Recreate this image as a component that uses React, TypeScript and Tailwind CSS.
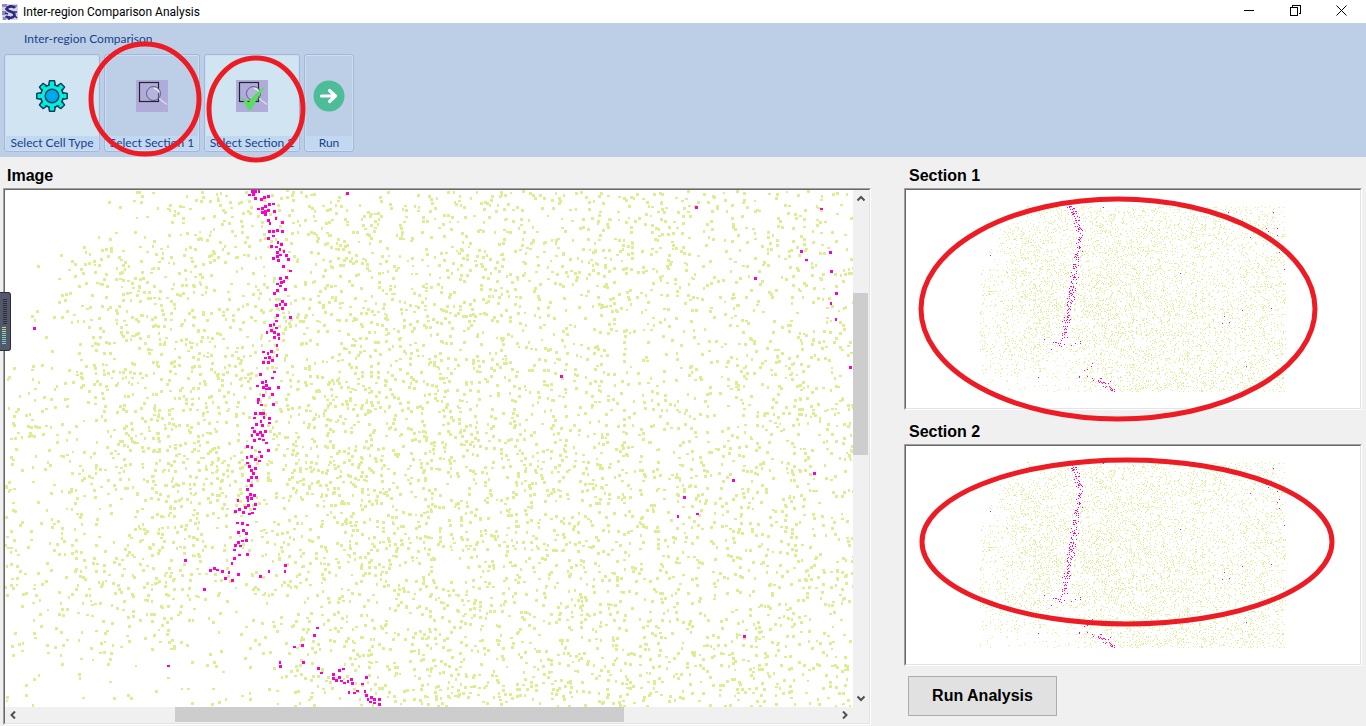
import type { ReactNode } from 'react';
import clsx from 'clsx';

type Cell = { x: number; y: number; w: number; h: number };

const IMAGE_WIDTH = 848;
const IMAGE_HEIGHT = 516;
const THUMB_SCALE = 0.36;

// Relative cell density over the tissue, 0 (empty) to 9 (packed)
const DENSITY = [
  '000134656665767566746553',
  '015666556777776667754454',
  '035878666688755565545534',
  '225768657787775455555566',
  '444589668888776665655666',
  '324789788887666577667766',
  '532475547777877776455565',
  '457785236677677665555566',
  '233322235567776665545543',
  '122111145688988776765655',
];

// Centres of the marked cells
const MARKED = [
  247, 1, 250, 1, 254, 1, 244, 5, 248, 4, 250, 8, 256, 9, 259, 7, 263, 6, 268, 14, 264, 14, 260, 16,
  253, 19, 257, 18, 257, 22, 260, 21, 263, 20, 260, 24, 269, 21, 271, 28, 263, 30, 265, 33, 277, 32,
  264, 41, 268, 41, 272, 40, 277, 41, 268, 46, 263, 48, 273, 52, 276, 54, 266, 56, 271, 57, 275, 59,
  272, 62, 279, 61, 275, 65, 272, 66, 281, 65, 268, 68, 273, 70, 283, 69, 278, 76, 285, 81, 281, 87,
  275, 88, 276, 92, 279, 91, 272, 94, 275, 96, 280, 99, 272, 100, 269, 103, 277, 111, 275, 114,
  271, 115, 280, 114, 277, 118, 272, 125, 285, 127, 271, 131, 269, 134, 265, 135, 271, 138, 266, 140,
  262, 142, 269, 142, 273, 144, 269, 147, 274, 148, 272, 155, 258, 162, 266, 161, 263, 163, 272, 165,
  264, 167, 260, 168, 267, 170, 263, 172, 258, 172, 269, 182, 255, 184, 267, 188, 261, 191, 257, 192,
  252, 196, 258, 197, 261, 195, 261, 199, 264, 198, 273, 197, 258, 205, 267, 204, 253, 209, 253, 212,
  256, 215, 268, 214, 250, 223, 255, 223, 258, 223, 249, 228, 259, 227, 264, 228, 256, 231, 257, 235,
  264, 233, 251, 234, 247, 238, 249, 241, 247, 245, 255, 242, 260, 241, 252, 244, 257, 245, 249, 250,
  254, 249, 258, 250, 261, 253, 242, 256, 247, 257, 263, 260, 254, 262, 242, 267, 246, 266, 256, 266,
  250, 269, 254, 271, 242, 273, 244, 276, 246, 280, 250, 278, 248, 283, 246, 287, 251, 287, 243, 290,
  246, 295, 242, 299, 245, 304, 249, 305, 242, 307, 246, 308, 233, 310, 243, 310, 250, 314, 243, 315,
  240, 317, 234, 319, 249, 319, 230, 321, 238, 322, 244, 324, 247, 323, 232, 333, 237, 333, 242, 335,
  238, 340, 233, 342, 241, 343, 241, 350, 237, 351, 233, 352, 230, 355, 235, 356, 229, 360, 234, 365,
  242, 364, 229, 368, 227, 373, 180, 370, 205, 380, 209, 378, 212, 380, 217, 381, 224, 382, 233, 384,
  220, 388, 227, 390, 199, 399, 255, 386, 264, 381, 280, 375, 280, 381, 312, 438, 309, 445, 297, 455,
  289, 457, 275, 472, 275, 476, 298, 472, 313, 478, 316, 483, 328, 484, 334, 480, 338, 479, 328, 488,
  334, 487, 331, 490, 336, 491, 339, 493, 343, 491, 346, 489, 347, 493, 361, 487, 357, 494, 344, 502,
  349, 503, 352, 501, 360, 501, 361, 505, 363, 509, 366, 507, 369, 509, 374, 509, 365, 512, 369, 513,
  374, 514, 163, 476, 29, 138, 342, 3, 691, 17, 816, 19, 796, 61, 825, 62, 801, 70, 826, 81, 750, 88,
  831, 103, 826, 113, 831, 129, 845, 177, 556, 186, 809, 283, 728, 290, 679, 307, 673, 326, 692, 324,
  739, 446,
];

function createRandom(seed: number) {
  let a = seed;
  return () => {
    a = (a + 0x6d2b79f5) | 0;
    let t = Math.imul(a ^ (a >>> 15), 1 | a);
    t = (t + Math.imul(t ^ (t >>> 7), 61 | t)) ^ t;
    return ((t ^ (t >>> 14)) >>> 0) / 4294967296;
  };
}

function cellSize(r: number) {
  if (r < 0.6) return { w: 3, h: 3 };
  if (r < 0.78) return { w: 3, h: 2 };
  if (r < 0.96) return { w: 2, h: 3 };
  return { w: 2, h: 2 };
}

function scatterCells(): Cell[] {
  const random = createRandom(2024);
  const cells: Cell[] = [];
  const used = new Set<number>();
  for (let i = 0; i < 10600; i++) {
    const x = Math.floor(random() * IMAGE_WIDTH);
    const y = Math.floor(random() * IMAGE_HEIGHT);
    // blur the borders between neighbouring density squares
    const jx = Math.min(IMAGE_WIDTH - 1, Math.max(0, x + (random() - 0.5) * 40));
    const jy = Math.min(IMAGE_HEIGHT - 1, Math.max(0, y + (random() - 0.5) * 40));
    const row = DENSITY[Math.floor((jy / IMAGE_HEIGHT) * DENSITY.length)];
    const density = Number(row[Math.floor((jx / IMAGE_WIDTH) * row.length)]);
    const keep = random() * 9 < density;
    const size = cellSize(random());
    const slot = Math.floor(x / 4) * 1000 + Math.floor(y / 4);
    if (!keep || used.has(slot)) continue;
    used.add(slot);
    cells.push({ x, y, ...size });
  }
  return cells;
}

function markedCells(): Cell[] {
  const random = createRandom(7);
  const cells: Cell[] = [];
  for (let i = 0; i < MARKED.length; i += 2) {
    cells.push({ x: MARKED[i] - 1, y: MARKED[i + 1] - 1, ...cellSize(random() * 0.9) });
  }
  return cells;
}

const toPath = (cells: Cell[]) => cells.map((c) => `M${c.x} ${c.y}h${c.w}v${c.h}h-${c.w}z`).join('');

const shrink = (cells: Cell[]) =>
  cells.map((c) => ({ x: Math.round(c.x * THUMB_SCALE), y: Math.round(c.y * THUMB_SCALE), w: 1, h: 1 }));

const plain = scatterCells();
const marked = markedCells();

const IMAGE_PATHS = { plain: toPath(plain), marked: toPath(marked) };
const THUMB_PATHS = { plain: toPath(shrink(plain)), marked: toPath(shrink(marked)) };

function Sunken({ className, children }: { className?: string; children: ReactNode }) {
  return (
    <div className={clsx('flex border border-t-[#a0a0a0] border-l-[#a0a0a0] border-r-white border-b-white', className)}>
      <div className="flex min-w-0 flex-1 border border-t-[#696969] border-l-[#696969] border-r-[#e3e3e3] border-b-[#e3e3e3] bg-white">
        {children}
      </div>
    </div>
  );
}

function Ring({ cx, cy, rx, ry }: { cx: number; cy: number; rx: number; ry: number }) {
  return (
    <svg className="pointer-events-none absolute inset-0 z-10 h-full w-full overflow-visible" aria-hidden="true">
      <ellipse cx={cx} cy={cy} rx={rx} ry={ry} fill="none" stroke="#ed1c24" strokeWidth="5" />
    </svg>
  );
}

function AppIcon() {
  return (
    <svg className="h-4 w-4" viewBox="0 0 16 16" aria-hidden="true">
      <rect width="16" height="16" fill="#d5d3e6" />
      <path d="M0 0h5v3H0zM0 7h4v4H0zM12 1h3v2h-3zM1 13h3v3H1z" fill="#8f8cbd" />
      <path
        d="M13 4C11 1.500 5 2 5 5c0 3 7 2 7.500 5.500C13 14 6 15 4 12"
        fill="none"
        stroke="#2c2a80"
        strokeWidth="2.600"
      />
      <path d="M8 1v3M3 5h3M11 8h4M7 12v4M13 12l2 2M3 9l3 1" stroke="#2c2a80" strokeWidth="1.500" />
    </svg>
  );
}

function GearIcon() {
  const teeth = [0, 45, 90, 135, 180, 225, 270, 315];
  return (
    <svg className="h-8 w-8" viewBox="0 0 32 32" aria-hidden="true">
      <g fill="#00f0d8" stroke="#0c4064" strokeWidth="1.500" strokeLinejoin="round">
        {teeth.map((angle) => (
          <path key={angle} d="M12.500 6l1-5.200h5l1 5.200z" transform={`rotate(${angle} 16 16)`} />
        ))}
        <circle cx="16" cy="16" r="11.300" />
      </g>
      <g fill="#00f0d8">
        {teeth.map((angle) => (
          <path key={angle} d="M13.600 7l.6-3h3.600l.6 3z" transform={`rotate(${angle} 16 16)`} />
        ))}
      </g>
      <circle cx="16" cy="16" r="6.800" fill="#00a8f0" stroke="#0c4064" strokeWidth="1.500" />
    </svg>
  );
}

function SectionIcon({ done }: { done?: boolean }) {
  return (
    <svg className="h-8 w-8" viewBox="0 0 32 32" aria-hidden="true">
      <rect width="32" height="32" fill="#b0acd9" />
      <rect x="3.500" y="2.500" width="19" height="19" fill="none" stroke="#23222f" strokeWidth="1.200" />
      <circle cx="17.500" cy="13.500" r="7" fill="#c4c0e6" fillOpacity="0.35" stroke="#55527f" strokeWidth="0.900" />
      <path d="M18 8.500q4 0 5 4" fill="none" stroke="#eceafa" strokeWidth="1.600" />
      <path d="M23 18.500l8 6" stroke="#dcd9f0" strokeWidth="1.500" />
      {done && <path d="M5 18.500q4-1 7.500 4.500Q19 12 30 6 21 17 15.500 29.500q-2 1-3.500 0Q9 22 5 18.500z" fill="#55e05a" />}
    </svg>
  );
}

function RunIcon() {
  return (
    <svg className="h-8 w-8" viewBox="0 0 32 32" aria-hidden="true">
      <circle cx="16" cy="16" r="15.500" fill="#4dbd97" />
      <path d="M8.500 16h13M16.500 10.500l6 5.500-6 5.500" fill="none" stroke="#fff" strokeWidth="3.200" strokeLinecap="round" strokeLinejoin="round" />
    </svg>
  );
}

type RibbonButtonProps = { label: string; width: string; active?: boolean; children: ReactNode };

function RibbonButton({ label, width, active, children }: RibbonButtonProps) {
  return (
    <button
      type="button"
      className={clsx(
        'flex h-[98px] flex-col rounded-[3px] border border-[#a2b7dc] p-px shadow-[inset_0_0_0_1px_#cfdef1]',
        width,
        active ? 'bg-[#d1e4f1]' : 'bg-[#bdcee7]'
      )}
    >
      <span className="flex w-full flex-1 items-center justify-center">{children}</span>
      <span className="h-3.5 w-full bg-[#c2d8f0] text-center text-[12px] leading-[14px] whitespace-nowrap text-[#15428b]">
        {label}
      </span>
    </button>
  );
}

function WindowButton({ label, children }: { label: string; children: ReactNode }) {
  return (
    <button type="button" aria-label={label} className="flex h-full w-[46px] items-center justify-center pb-0.5">
      <svg className="h-[11px] w-[11px]" viewBox="0 0 11 11" fill="none" stroke="#000" shapeRendering="crispEdges">
        {children}
      </svg>
    </button>
  );
}

function ScrollArrow({ label, d }: { label: string; d: string }) {
  return (
    <button type="button" aria-label={label} className="flex h-4 w-4 shrink-0 items-center justify-center">
      <svg className="h-2 w-2" viewBox="0 0 8 8" fill="none" stroke="#505050" strokeWidth="2">
        <path d={d} />
      </svg>
    </button>
  );
}

function SectionPreview({ title, children }: { title: string; children: ReactNode }) {
  return (
    <Sunken className="relative min-h-[222px] flex-1">
      <div className="flex flex-1 items-center justify-center">
        <svg
          role="img"
          aria-label={title}
          className="h-[186px] w-[306px]"
          viewBox="0 0 306 186"
          shapeRendering="crispEdges"
        >
          <path d={THUMB_PATHS.plain} fill="#dced92" />
          <path d={THUMB_PATHS.marked} fill="#ff00cc" />
        </svg>
      </div>
      {children}
    </Sunken>
  );
}

function LevelMeter() {
  const bars = Array.from({ length: 20 }, (_, i) => i);
  return (
    <div className="absolute top-[292px] left-0 z-20 h-[59px] w-[11px] rounded-r-[3px] border border-l-0 border-[#2b2d3c] bg-[#55586a]">
      <svg className="h-full w-full" aria-hidden="true" shapeRendering="crispEdges">
        {bars.map((i) => (
          <rect key={i} x={i < 13 ? 3 : 2} y={6 + i * 2 + (i < 13 ? 0 : 2)} width="4" height="1" fill={i < 13 ? '#2c2e3a' : i < 16 ? '#b3e08a' : '#74d8c0'} />
        ))}
        <path d="M2 50h4M2 48h4" stroke="#5cd6cf" />
      </svg>
    </div>
  );
}

export default function App() {
  return (
    <div className="relative flex min-h-screen flex-col bg-[#f0f0f0] font-['Liberation_Sans',sans-serif] text-black">
      <header className="flex h-[23px] items-center justify-between bg-white pr-0.5 pl-0.5">
        <div className="flex items-center gap-[5px]">
          <AppIcon />
          <span className="font-['Roboto',sans-serif] text-[12px] leading-4">Inter-region Comparison Analysis</span>
        </div>
        <div className="flex h-full">
          <WindowButton label="Minimize">
            <path d="M0 5.500h10" />
          </WindowButton>
          <WindowButton label="Restore">
            <path d="M.5 2.500h7v8h-7zM2.500 2.500v-2h8v8h-2" />
          </WindowButton>
          <WindowButton label="Close">
            <path d="M.5.5l10 10M10.500.5l-10 10" shapeRendering="auto" />
          </WindowButton>
        </div>
      </header>

      <nav className="relative h-[134px] bg-[#bdcfe7] px-1 font-['Lato',sans-serif]">
        <h2 className="h-[31px] pl-5 text-[12px] leading-[31px] text-[#15428b]">Inter-region Comparison</h2>
        <div className="flex gap-1">
          <RibbonButton label="Select Cell Type" width="w-24" active>
            <GearIcon />
          </RibbonButton>
          <RibbonButton label="Select Section 1" width="w-24">
            <SectionIcon />
          </RibbonButton>
          <RibbonButton label="Select Section 2" width="w-24" active>
            <SectionIcon done />
          </RibbonButton>
          <RibbonButton label="Run" width="w-[50px]">
            <RunIcon />
          </RibbonButton>
        </div>
        <Ring cx={145} cy={76} rx={54} ry={55} />
        <Ring cx={256} cy={86} rx={47} ry={51} />
      </nav>

      <main className="flex flex-1 gap-[33px] pr-1 pl-[3px]">
        <section className="flex min-w-0 flex-1 flex-col pb-px">
          <h1 className="h-[31px] pt-[9px] pl-1 text-base leading-5 font-bold">Image</h1>
          <Sunken className="flex-1">
            <div className="grid min-w-0 flex-1 grid-cols-[1fr_16px] grid-rows-[1fr_16px]">
              <div className="min-w-0 overflow-hidden">
                <svg role="img" aria-label="Cell map" className="h-full w-full" shapeRendering="crispEdges">
                  <path d={IMAGE_PATHS.plain} fill="#dced92" />
                  <path d={IMAGE_PATHS.marked} fill="#ff00cc" />
                </svg>
              </div>
              <div className="flex flex-col items-center justify-between bg-[#f0f0f0]">
                <ScrollArrow label="Scroll up" d="M.5 6.500L4 3 7.500 6.500" />
                <div className="flex w-full flex-1 flex-col">
                  <div className="flex-[87]" />
                  <div className="mr-px flex-[162] bg-[#cdcdcd]" />
                  <div className="flex-[236]" />
                </div>
                <ScrollArrow label="Scroll down" d="M.5 1.500L4 5 7.500 1.500" />
              </div>
              <div className="flex items-center justify-between bg-[#f0f0f0]">
                <ScrollArrow label="Scroll left" d="M6 .5L2.500 4 6 7.500" />
                <div className="flex h-full flex-1">
                  <div className="flex-[154]" />
                  <div className="mb-px flex-[449] bg-[#cdcdcd]" />
                  <div className="flex-[213]" />
                </div>
                <ScrollArrow label="Scroll right" d="M2 .5L5.500 4 2 7.500" />
              </div>
              <div className="bg-[#f0f0f0]" />
            </div>
          </Sunken>
        </section>

        <aside className="flex w-[458px] flex-col pb-2.5">
          <h2 className="h-[31px] pt-[9px] pl-[5px] text-base leading-5 font-bold">Section 1</h2>
          <SectionPreview title="Section 1">
            <Ring cx={213} cy={120} rx={197} ry={110} />
          </SectionPreview>
          <h2 className="h-[34px] pt-3 pl-[5px] text-base leading-5 font-bold">Section 2</h2>
          <SectionPreview title="Section 2">
            <Ring cx={222} cy={97} rx={205} ry={82} />
          </SectionPreview>
          <button
            type="button"
            className="mt-2.5 ml-1 h-10 w-[149px] border border-[#adadad] bg-[#e1e1e1] text-base font-bold"
          >
            Run Analysis
          </button>
        </aside>
      </main>

      <LevelMeter />
    </div>
  );
}
